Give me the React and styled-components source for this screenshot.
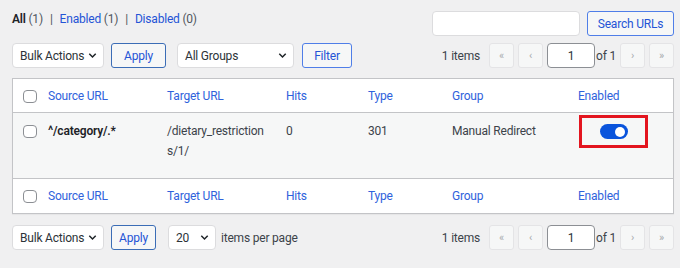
import React from 'react';
import styled, { createGlobalStyle } from 'styled-components';

const Global = createGlobalStyle`
  body {
    margin: 0;
    background: #f0f0f1;
    font-family: Roboto, "Noto Sans", sans-serif;
    font-size: 12px;
    letter-spacing: -0.2px;
    color: #3c434a;
  }
  input, button { letter-spacing: inherit; }
`;

const Page = styled.div`
  padding: 11px 6px 0 12px;
`;

const TopBar = styled.div`
  display: flex;
  justify-content: space-between;
  align-items: flex-start;
  height: 25px;
`;

const SubNav = styled.div`
  line-height: 17px;
  font-size: 12px;
  b { color: #1d2327; font-weight: 600; }
  a { color: #2454d6; text-decoration: none; }
  .sep { color: #50575e; margin: 0 7px; }
`;

const Count = styled.span`
  color: #50575e;
`;

const SearchBox = styled.div`
  display: flex;
  gap: 7px;
`;

const Input = styled.input`
  box-sizing: border-box;
  width: ${p => p.$w}px;
  height: 25px;
  border: 1px solid ${p => (p.$dark ? '#8c8f94' : '#dcdcde')};
  border-radius: 4px;
  background: #fff;
  font: inherit;
  text-align: ${p => (p.$center ? 'center' : 'left')};
  color: #2c3338;
  padding: 0 6px;
`;

const Button = styled.button`
  box-sizing: border-box;
  width: ${p => p.$w}px;
  height: 25px;
  border: 1px solid ${p => (p.$bright ? '#4f7ee8' : '#3b6db6')};
  border-radius: 3px;
  background: #f6f7f7;
  color: #2454d6;
  font: inherit;
  font-size: 12px;
  white-space: nowrap;
  padding: 0;
`;

const Toolbar = styled.div`
  display: flex;
  align-items: center;
  height: 25px;
  margin-top: ${p => p.$mt}px;
  white-space: nowrap;
`;

const SelectBox = styled.div`
  box-sizing: border-box;
  width: ${p => p.$w}px;
  height: 25px;
  border: 1px solid #dcdcde;
  border-radius: 4px;
  background: #fff;
  display: flex;
  align-items: center;
  justify-content: space-between;
  padding: 0 5px 0 7px;
  margin-right: ${p => p.$mr || 0}px;
  font-size: 12px;
  color: #2c3338;
  white-space: nowrap;
  svg { flex: none; }
`;

const Spacer = styled.div`
  width: ${p => p.$w}px;
  flex: none;
`;

const Pager = styled.div`
  margin-left: auto;
  display: flex;
  align-items: center;
  gap: 4px;
  font-size: 12px;
`;

const ItemsLabel = styled.span`
  margin-right: 5px;
`;

const PageBtn = styled.span`
  box-sizing: border-box;
  width: 25px;
  height: 25px;
  display: flex;
  align-items: center;
  justify-content: center;
  border: 1px solid #e4e4e6;
  border-radius: 3px;
  background: #f6f7f7;
  color: #a7aaad;
  font-size: 11px;
`;

const OfLabel = styled.span`
  margin: 0 0 0 -3px;
`;

const Table = styled.div`
  margin-top: 10px;
  border: 1px solid #c3c4c7;
  background: #fff;
  box-shadow: 0 1px 1px rgba(0, 0, 0, 0.04);
`;

const Row = styled.div`
  display: grid;
  grid-template-columns: 35px 119px 119px 82px 84px 126px 1fr;
  box-sizing: border-box;
  min-height: ${p => p.$h}px;
  padding-top: ${p => p.$pt}px;
  background: ${p => (p.$alt ? '#f6f7f7' : '#fff')};
  border-bottom: ${p => (p.$bottom ? '1px solid #c3c4c7' : 'none')};
  line-height: 20px;
  font-size: 12px;
`;

const Cell = styled.div`
  padding-right: 8px;
  color: ${p => (p.$head ? '#2f62dc' : '#3c434a')};
  font-weight: ${p => (p.$bold ? 600 : 400)};
  ${p => p.$bold && 'color: #1d2327;'}
  word-break: break-all;
`;

const TargetText = styled.div`
  max-width: 103px;
`;

const CheckCell = styled.div`
  padding: 4px 0 0 10px;
`;

const Check = styled.span`
  display: block;
  box-sizing: border-box;
  width: 14px;
  height: 13px;
  border: 1px solid #8c8f94;
  border-radius: 4px;
  background: #fff;
`;

const Highlight = styled.div`
  box-sizing: border-box;
  width: 69px;
  height: 33px;
  margin: -6px 0 0 1px;
  border: 3px solid #e3151f;
  display: flex;
  align-items: center;
  justify-content: center;
`;

const Toggle = styled.span`
  box-sizing: border-box;
  width: 28px;
  height: 15px;
  border-radius: 8px;
  background: #0a54dc;
  display: flex;
  align-items: center;
  justify-content: flex-end;
  padding-right: 3px;
  &::after {
    content: '';
    width: 10px;
    height: 10px;
    border-radius: 50%;
    background: #fff;
  }
`;

const Chevron = () => (
  <svg width="11" height="11" viewBox="0 0 12 12">
    <path d="M2.5 4.2 6 7.7l3.5-3.5" fill="none" stroke="#1d2327" strokeWidth="1.6" />
  </svg>
);

const Pagination = () => (
  <Pager>
    <ItemsLabel>1 items</ItemsLabel>
    <PageBtn>«</PageBtn>
    <PageBtn>‹</PageBtn>
    <Input $w={48} $dark $center defaultValue="1" />
    <OfLabel>of 1</OfLabel>
    <PageBtn>›</PageBtn>
    <PageBtn>»</PageBtn>
  </Pager>
);

const columns = ['Source URL', 'Target URL', 'Hits', 'Type', 'Group', 'Enabled'];

const HeadRow = ({ bottom }) => (
  <Row $h={34} $pt={7} $bottom={bottom}>
    <CheckCell><Check /></CheckCell>
    {columns.map(c => (
      <Cell $head key={c}>{c}</Cell>
    ))}
  </Row>
);

export default function App() {
  return (
    <Page>
      <Global />
      <TopBar>
        <SubNav>
          <b>All</b> <Count>(1)</Count>
          <span className="sep">|</span>
          <a href="#">Enabled</a> <Count>(1)</Count>
          <span className="sep">|</span>
          <a href="#">Disabled</a> <Count>(0)</Count>
        </SubNav>
        <SearchBox>
          <Input $w={148} />
          <Button $w={87} $bright>Search URLs</Button>
        </SearchBox>
      </TopBar>

      <Toolbar $mt={7}>
        <SelectBox $w={92} $mr={7}>Bulk Actions <Chevron /></SelectBox>
        <Button $w={55}>Apply</Button>
        <Spacer $w={11} />
        <SelectBox $w={117} $mr={8}>All Groups <Chevron /></SelectBox>
        <Button $w={50} $bright>Filter</Button>
        <Pagination />
      </Toolbar>

      <Table>
        <HeadRow bottom />
        <Row $h={66} $pt={8} $alt $bottom>
          <CheckCell><Check /></CheckCell>
          <Cell $bold>^/category/.*</Cell>
          <Cell><TargetText>/dietary_restrictions/1/</TargetText></Cell>
          <Cell>0</Cell>
          <Cell>301</Cell>
          <Cell>Manual Redirect</Cell>
          <Cell>
            <Highlight><Toggle /></Highlight>
          </Cell>
        </Row>
        <HeadRow />
      </Table>

      <Toolbar $mt={11}>
        <SelectBox $w={92} $mr={7}>Bulk Actions <Chevron /></SelectBox>
        <Button $w={45}>Apply</Button>
        <Spacer $w={12} />
        <SelectBox $w={48} $mr={5}>20 <Chevron /></SelectBox>
        <span>items per page</span>
        <Pagination />
      </Toolbar>
    </Page>
  );
}
